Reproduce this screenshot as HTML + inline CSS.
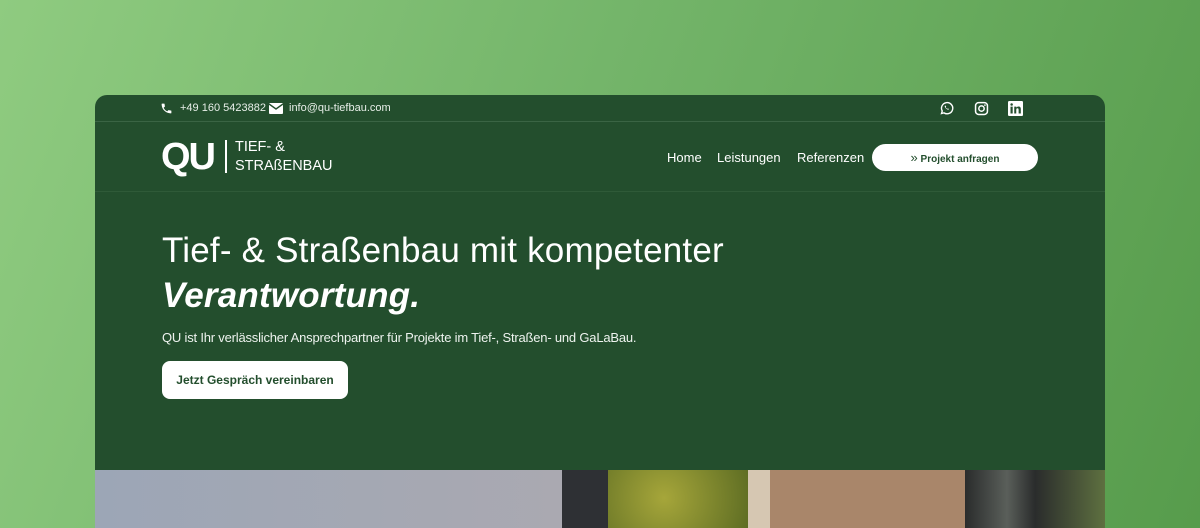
<!DOCTYPE html>
<html style="background:#6fb063"><head><meta charset="utf-8"><style>
*{margin:0;padding:0;box-sizing:border-box}
body{width:1200px;height:528px;overflow:hidden;font-family:"Liberation Sans",sans-serif;background:linear-gradient(110deg,#8fcb80 0%,#74b56a 45%,#579c4c 100%);position:relative}
.card{position:absolute;left:95px;top:95px;width:1010px;height:433px;background:#234e2d;border-radius:12px 12px 0 0;overflow:hidden;color:#fff}
.top{position:absolute;left:0;top:0;width:100%;height:27px;border-bottom:1px solid #3a6444;font-size:11px;color:#e8efe9}
.hdr{position:absolute;left:0;top:27px;width:100%;height:70px;border-bottom:1px solid #2f5a38}
.nav{position:absolute;top:28px;font-size:13px}
.btn1{position:absolute;left:777px;top:49px;width:166px;height:27px;background:#fff;border-radius:14px;color:#234e2d;font-size:10px;font-weight:bold;text-align:center;line-height:27px}
h1{position:absolute;left:67px;top:133px;font-size:35px;font-weight:normal;line-height:45px;letter-spacing:0.2px}
p{position:absolute;left:67px;top:235px;font-size:13px;color:#eef3ef;letter-spacing:-0.2px}
.btn2{position:absolute;left:67px;top:266px;width:186px;height:38px;background:#fff;border-radius:8px;color:#234e2d;font-size:12px;font-weight:bold;text-align:center;line-height:38px}
.img{position:absolute;left:0;top:375px;height:70px}
</style></head><body>
<div class="card">
<div class="top">
<svg style="position:absolute;left:65px;top:7px" width="13" height="13" viewBox="0 0 24 24"><path fill="#fff" d="M6.6 10.8a15 15 0 006.6 6.6l2.2-2.2c.3-.3.7-.4 1-.2 1.1.4 2.300.6 3.6.6.6 0 1 .4 1 1V20c0 .6-.4 1-1 1A17 17 0 013 4c0-.6.4-1 1-1h3.5c.6 0 1 .4 1 1 0 1.3.2 2.5.6 3.6.1.3 0 .7-.2 1z"/></svg>
<span style="position:absolute;left:85px;top:7px">+49 160 5423882</span>
<svg style="position:absolute;left:174px;top:8px" width="14" height="11" viewBox="0 0 14 11"><rect width="14" height="11" rx="1" fill="#fff"/><path d="M0 1l7 5 7-5" stroke="#234e2d" stroke-width="1.4" fill="none"/></svg>
<span style="position:absolute;left:194px;top:7px">info@qu-tiefbau.com</span>
<svg style="position:absolute;left:844px;top:6px" width="15" height="15" viewBox="0 0 24 24"><path fill="none" stroke="#fff" stroke-width="2.2" d="M4 20l1.2-4A9 9 0 1 1 8 19z"/><path fill="#fff" d="M9 8c.5 3 3 5.5 6 6l1-1.3-1.8-1-1 .8c-1-.5-2-1.5-2.5-2.5l.8-1-1-1.8z"/></svg>
<svg style="position:absolute;left:879px;top:6px" width="15" height="15" viewBox="0 0 24 24"><rect x="2.5" y="2.5" width="19" height="19" rx="5" fill="none" stroke="#fff" stroke-width="2.4"/><circle cx="12" cy="12" r="4.3" fill="none" stroke="#fff" stroke-width="2.4"/><circle cx="17.5" cy="6.5" r="1.3" fill="#fff"/></svg>
<svg style="position:absolute;left:913px;top:6px" width="15" height="15" viewBox="0 0 24 24"><rect width="24" height="24" rx="2" fill="#fff"/><rect x="4" y="9" width="3.5" height="11" fill="#234e2d"/><circle cx="5.8" cy="5.5" r="2" fill="#234e2d"/><path d="M10 9h3.3v1.6c.6-1 1.8-1.9 3.6-1.9 3 0 3.6 2 3.6 4.6V20H17v-5.7c0-1.3-.1-2.8-1.8-2.8s-2 1.3-2 2.7V20H10z" fill="#234e2d"/></svg>
</div>
<div class="hdr">
<div style="position:absolute;left:66px;top:15px;font-size:38px;font-weight:bold;letter-spacing:-2px;line-height:40px">QU</div>
<div style="position:absolute;left:130px;top:18px;width:2px;height:33px;background:#fff"></div>
<div style="position:absolute;left:140px;top:16px;font-size:14.5px;line-height:19px">TIEF- &amp;<br>STRAßENBAU</div>
<span class="nav" style="left:572px">Home</span>
<span class="nav" style="left:622px">Leistungen</span>
<span class="nav" style="left:702px">Referenzen</span>
</div>
<div class="btn1"><span style="font-weight:normal;font-size:13px">»</span> Projekt anfragen</div>
<h1>Tief- &amp; Straßenbau mit kompetenter<br><i style="font-weight:bold">Verantwortung.</i></h1>
<p>QU ist Ihr verlässlicher Ansprechpartner für Projekte im Tief-, Straßen- und GaLaBau.</p>
<div class="btn2">Jetzt Gespräch vereinbaren</div>
<div class="img" style="width:467px;background:linear-gradient(90deg,#9ca6b6,#aaa9b1)"></div>
<div class="img" style="left:467px;width:46px;background:#2e3034"></div>
<div class="img" style="left:513px;width:140px;background:radial-gradient(circle at 40% 40%,#a6a63a,#5a6a22)"></div>
<div class="img" style="left:653px;width:22px;background:#d6c7b2"></div>
<div class="img" style="left:675px;width:195px;background:#a9866a"></div>
<div class="img" style="left:870px;width:140px;background:linear-gradient(90deg,#2a2c2c,#5a5f5a 30%,#2a2c2c 50%,#5e7040)"></div>
</div>
</body></html>
